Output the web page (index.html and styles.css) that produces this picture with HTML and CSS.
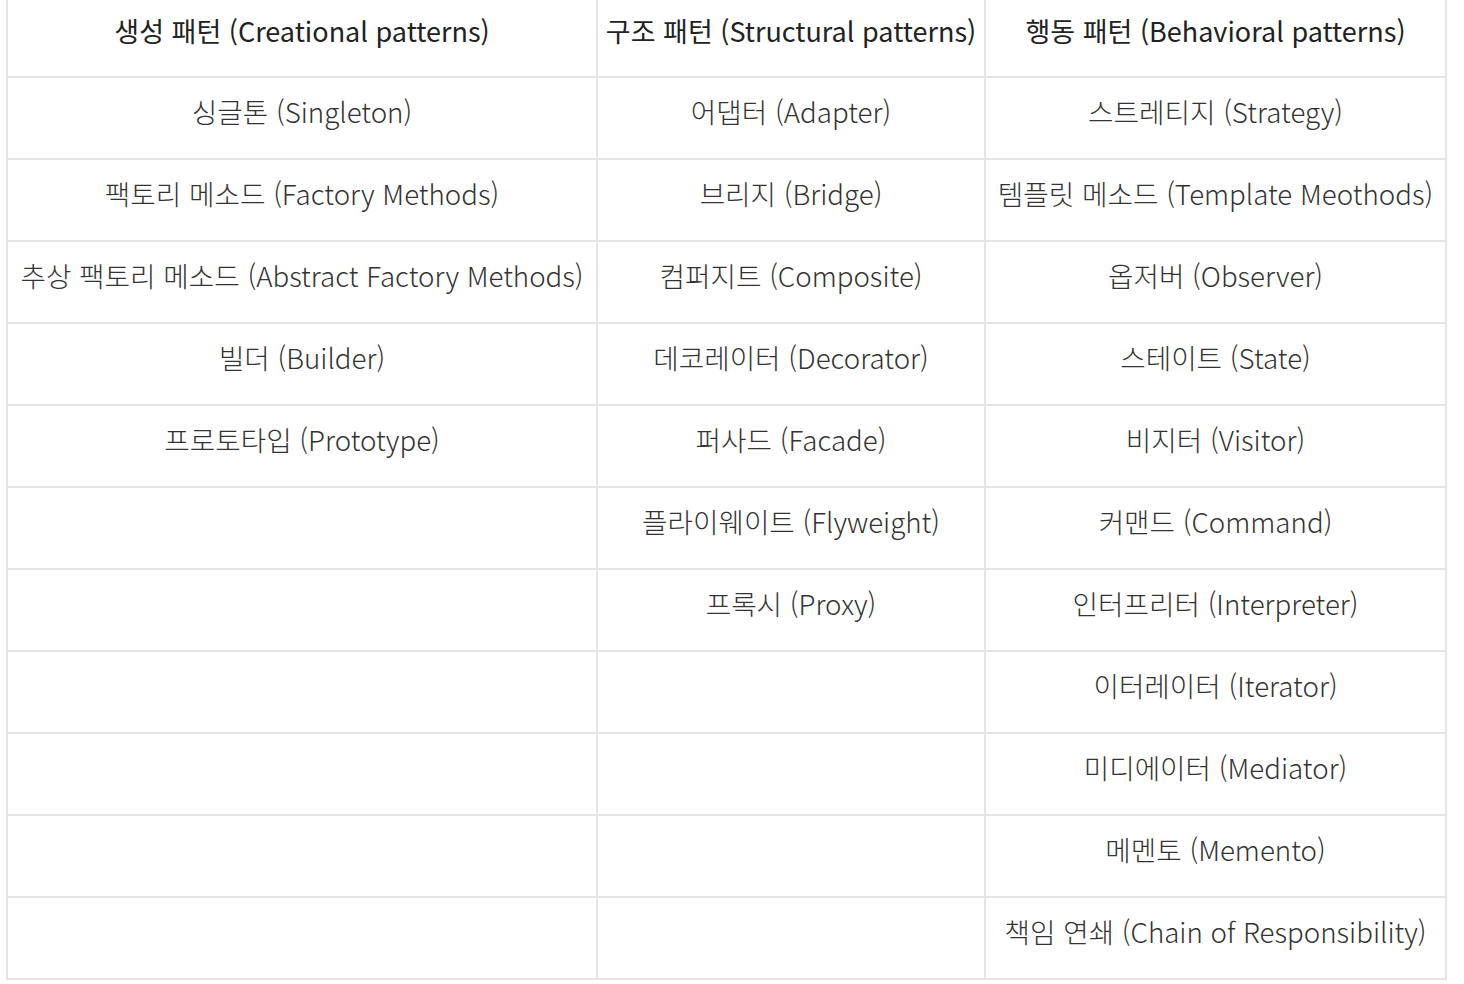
FILE: index.html
```html
<!DOCTYPE html>
<html lang="ko">
<head>
<meta charset="utf-8">
<link rel="stylesheet" href="styles.css">
</head>
<body>
<table class="patterns">
  <colgroup>
    <col class="c1"><col class="c2"><col class="c3">
  </colgroup>
  <thead>
    <tr><th>생성 패턴 (Creational patterns)</th><th>구조 패턴 (Structural patterns)</th><th>행동 패턴 (Behavioral patterns)</th></tr>
  </thead>
  <tbody>
    <tr><td>싱글톤 (Singleton)</td><td>어댑터 (Adapter)</td><td>스트레티지 (Strategy)</td></tr>
    <tr><td>팩토리 메소드 (Factory Methods)</td><td>브리지 (Bridge)</td><td>템플릿 메소드 (Template Meothods)</td></tr>
    <tr><td>추상 팩토리 메소드 (Abstract Factory Methods)</td><td>컴퍼지트 (Composite)</td><td>옵저버 (Observer)</td></tr>
    <tr><td>빌더 (Builder)</td><td>데코레이터 (Decorator)</td><td>스테이트 (State)</td></tr>
    <tr><td>프로토타입 (Prototype)</td><td>퍼사드 (Facade)</td><td>비지터 (Visitor)</td></tr>
    <tr><td></td><td>플라이웨이트 (Flyweight)</td><td>커맨드 (Command)</td></tr>
    <tr><td></td><td>프록시 (Proxy)</td><td>인터프리터 (Interpreter)</td></tr>
    <tr><td></td><td></td><td>이터레이터 (Iterator)</td></tr>
    <tr><td></td><td></td><td>미디에이터 (Mediator)</td></tr>
    <tr><td></td><td></td><td>메멘토 (Memento)</td></tr>
    <tr><td></td><td></td><td>책임 연쇄 (Chain of Responsibility)</td></tr>
  </tbody>
</table>
</body>
</html>
```
FILE: styles.css
```css
html, body {
  margin: 0;
  padding: 0;
  background: #fff;
}
body {
  padding: 0 0 0 6px;
  font-family: "Noto Sans CJK KR", "Noto Sans", sans-serif;
  color: #333;
}
.patterns {
  border-collapse: collapse;
  width: 1439px;
  table-layout: fixed;
}
.c1 { width: 590px; }
.c2 { width: 388px; }
.c3 { width: 461px; }
.patterns th,
.patterns td {
  border: 2px solid #e5e5e5;
  text-align: center;
  vertical-align: middle;
  padding: 0;
  white-space: nowrap;
}
.patterns thead th {
  border-top: none;
  height: 77px;
  font-size: 27px;
  font-weight: 400;
  color: #222;
  padding-bottom: 16px;
  box-sizing: border-box;
}
.patterns td {
  height: 82px;
  padding-bottom: 14px;
  box-sizing: border-box;
  font-size: 27.7px;
  font-weight: 300;
  color: #333;
}
```
